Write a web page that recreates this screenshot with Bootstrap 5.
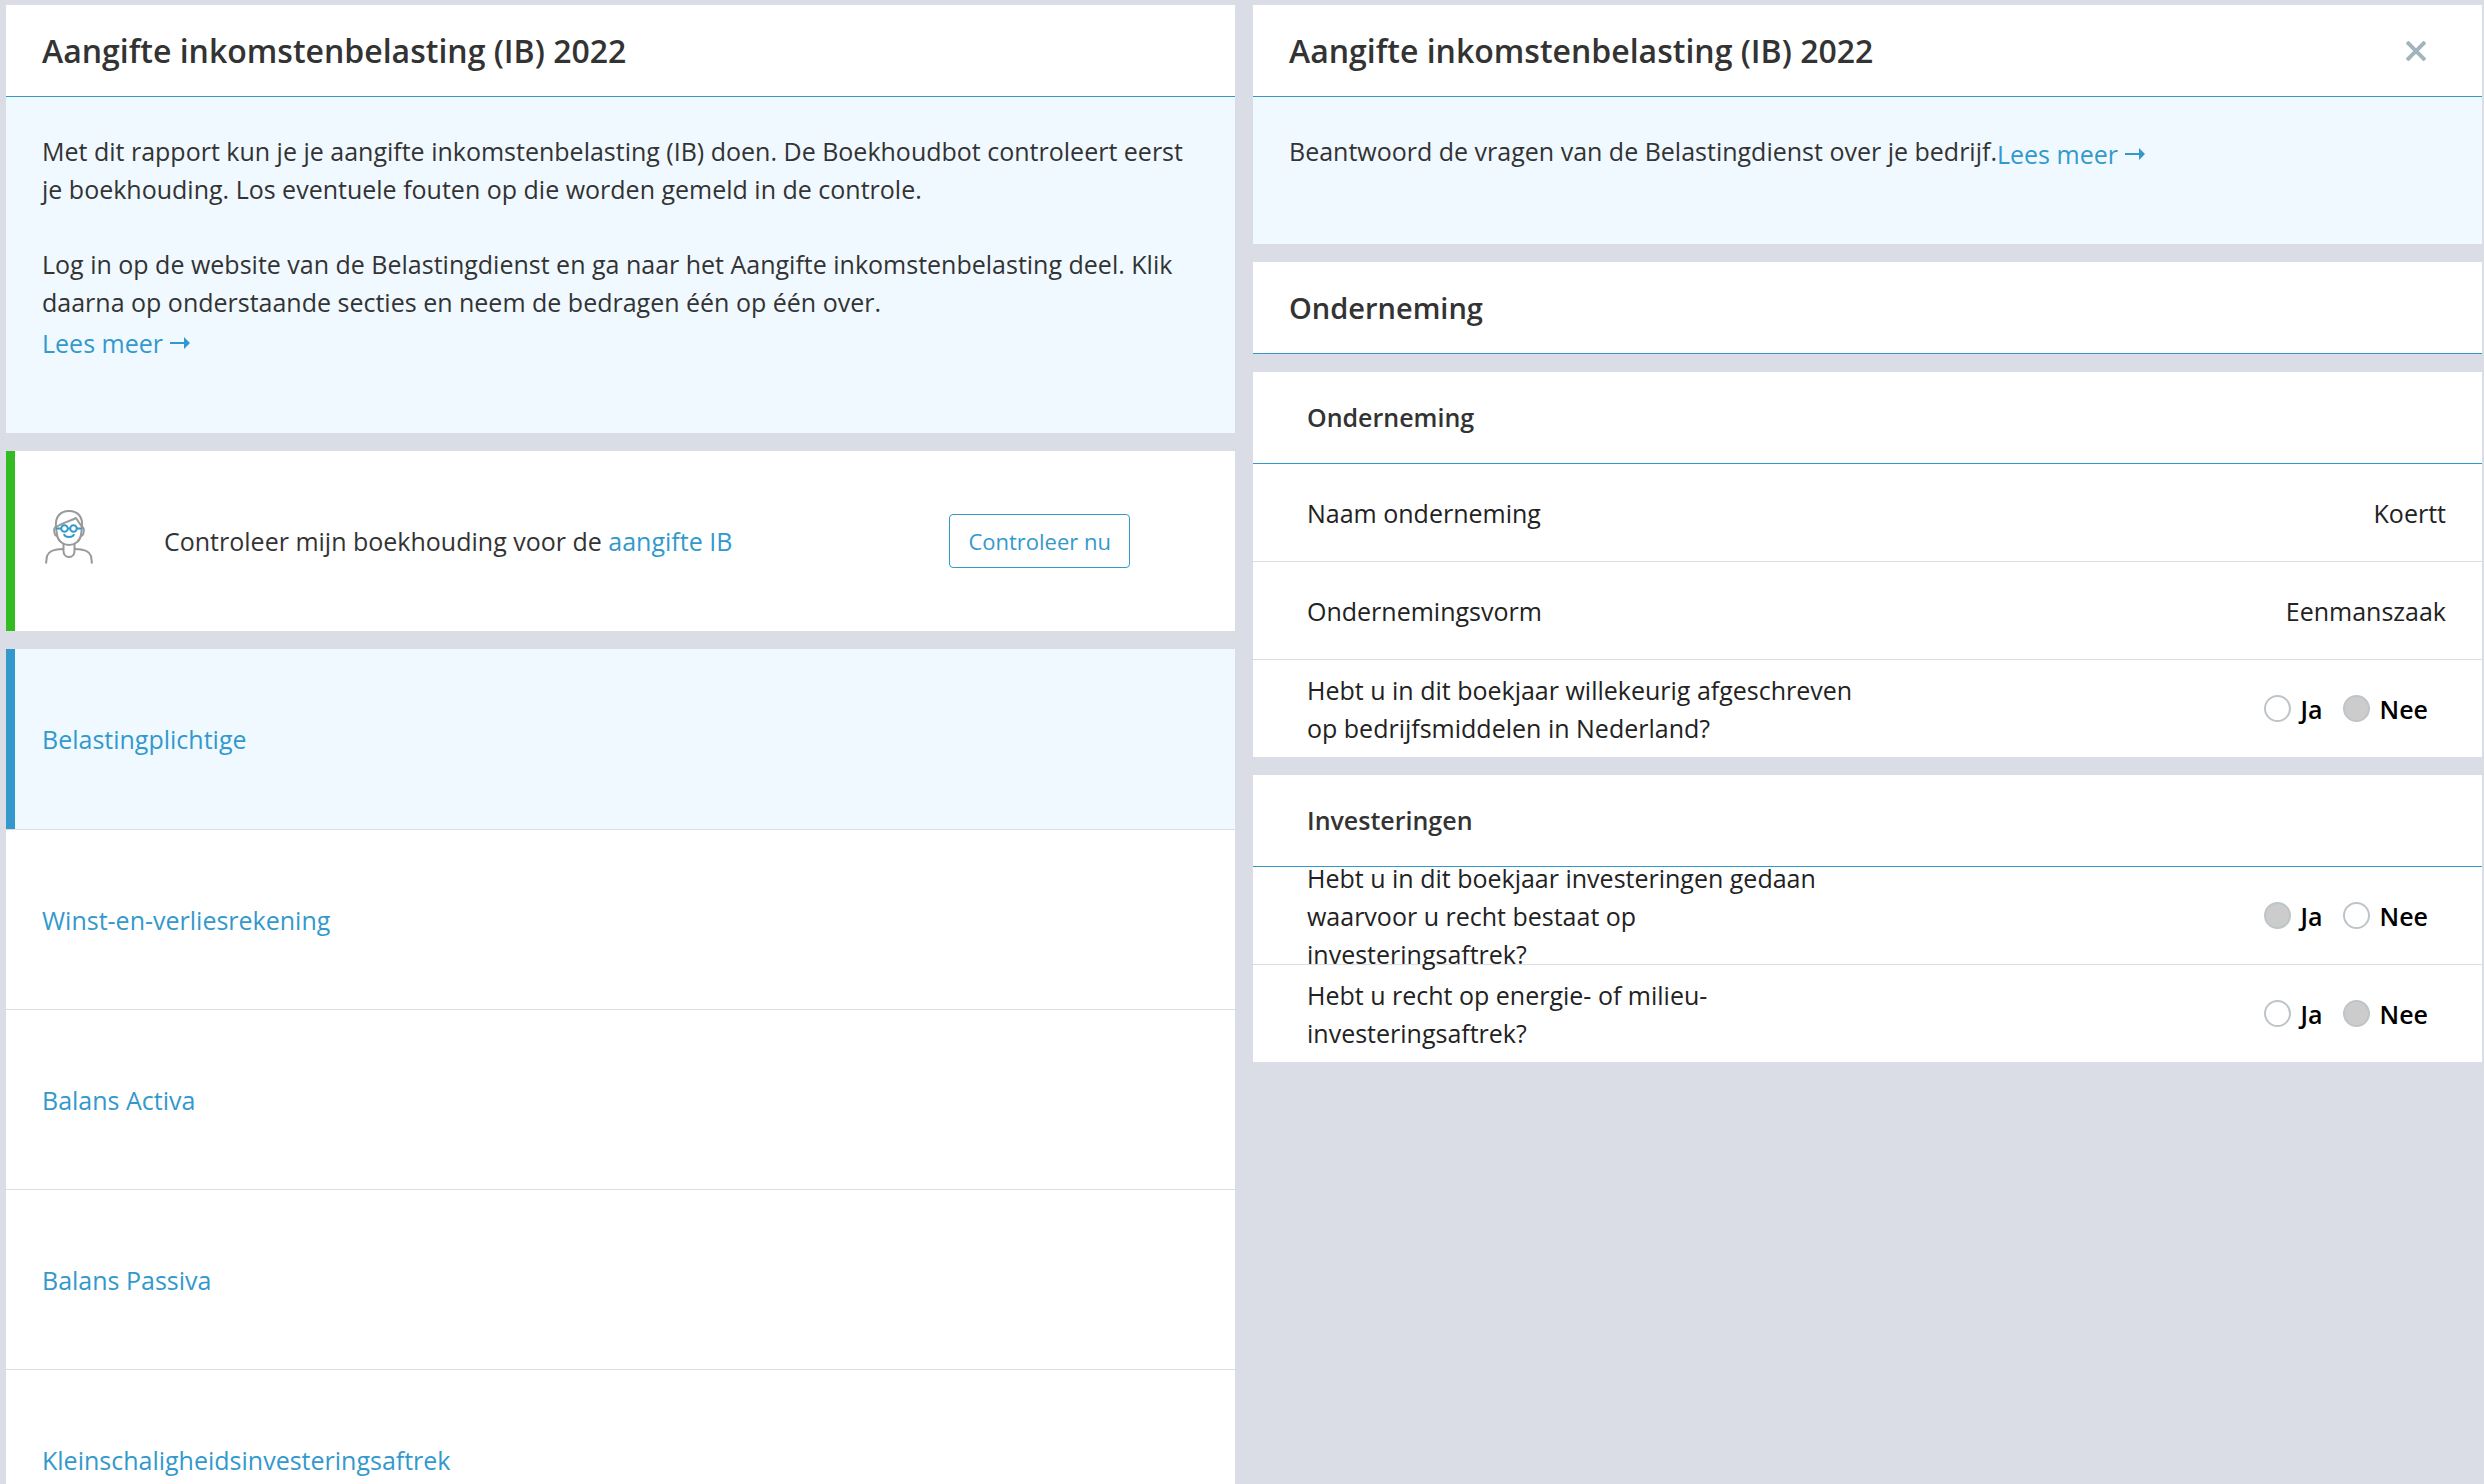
<!DOCTYPE html>
<html lang="nl">
<head>
<meta charset="utf-8">
<meta name="viewport" content="width=device-width, initial-scale=1">
<title>Aangifte inkomstenbelasting (IB) 2022</title>
<link href="https://cdn.jsdelivr.net/npm/bootstrap@5.3.0/dist/css/bootstrap.min.css" rel="stylesheet">
<style>
  :root { --blue: #3399cc; --pale: #f0f9ff; --line: #dadde6; }
  body { background: var(--line); color: #333; font: 400 25px/38px "Open Sans", sans-serif; }
  a, a:hover { color: var(--blue); text-decoration: none; }
  .page { gap: 18px; padding: 5px 2px 0 6px; }
  .pane { flex: 1 1 0; min-width: 0; gap: 18px; }
  .pane-head { height: 92px; padding: 0 36px; background: #fff; border-bottom: 1px solid var(--blue); }
  .pane-head h1, .pane-head h2, .pane-head h3 { margin: 0; font-weight: 600; line-height: 38px; }
  .pane-head h1 { font-size: 32px; }
  .pane-head h2 { font-size: 29px; }
  .pane-head h3 { font-size: 25px; }
  .pane-head.inset { padding: 0 54px 2px; }
  .intro { background: var(--pale); padding: 35px 36px 71px; }
  .intro p { margin: 0; }
  .intro p + p { margin-top: 37px; }
  .more { padding-top: 3px; gap: 7px; }
  .close-x { border: 0; background: none; padding: 0 20px; line-height: 0; }
  .tall { height: 180px; padding: 0 36px; background: #fff; }
  .tall + .tall { border-top: 1px solid var(--line); }
  .tall.ok { padding: 0 105px 0 27px; border-left: 9px solid #33bb22; }
  .tall.current { padding-left: 27px; border-left: 9px solid var(--blue); background: var(--pale); }
  .bot { width: 54px; margin: 0 68px 8px 0; }
  .check-btn { height: 54px; padding: 0 18px; border: 1px solid var(--blue); border-radius: 4px; background: #fff; color: var(--blue); font-size: 22px; }
  .answer { height: 97px; padding: 0 36px 0 54px; background: #fff; color: #222; }
  .answer + .answer { height: 98px; border-top: 1px solid var(--line); }
  .answer .ask { width: 550px; }
  .answer .choice { color: #000; font-weight: 600; gap: 20px; padding-right: 18px; }
  .choice label { gap: 10px; }
  .choice input { appearance: none; width: 27px; height: 27px; margin: 0; border: 2px solid #bdc5c9; border-radius: 50%; background: #fff; }
  .choice input:checked { background: #ccc; }
</style>
<script src="https://cdn.jsdelivr.net/npm/bootstrap@5.3.0/dist/js/bootstrap.bundle.min.js"></script>
</head>
<body>
<div class="page d-flex align-items-start vh-100 overflow-hidden">
  <main class="pane d-flex flex-column">
    <section>
      <header class="pane-head d-flex align-items-center"><h1>Aangifte inkomstenbelasting (IB) 2022</h1></header>
      <div class="intro">
        <p>Met dit rapport kun je je aangifte inkomstenbelasting (IB) doen. De Boekhoudbot controleert eerst je boekhouding. Los eventuele fouten op die worden gemeld in de controle.</p>
        <p>Log in op de website van de Belastingdienst en ga naar het Aangifte inkomstenbelasting deel. Klik daarna op onderstaande secties en neem de bedragen één op één over.</p>
        <a href="#" class="more d-flex align-items-center">Lees meer
          <svg width="21" height="16" viewBox="0 0 21 16" aria-hidden="true"><path d="M0 7h14V2l6 6-6 6V9H0z" fill="currentColor"/></svg></a>
      </div>
    </section>
    <section class="tall ok d-flex align-items-center">
      <svg class="bot flex-shrink-0" height="54" viewBox="0 0 54 54" fill="none" stroke="#999" stroke-width="2" stroke-linejoin="round" aria-hidden="true">
        <path d="M14 17C13 7 18 1 27 1s14 6 13 16"/>
        <path d="M14 17c7-4 14-6 20-9l6 9"/>
        <path d="M14 17l1 8c1 6 6 10 12 10s11-4 12-10l1-8"/>
        <path d="M14 17c-3 0-2 9 1 9M40 17c3 0 2 9-1 9"/>
        <path d="M21.500 33v8c0 3 2 6 5.500 6s5.500-3 5.500-6v-8"/>
        <path d="M21 39C9 39 6 43 5 46l-1 7.500M33 39c12 0 15 4 16 7l1 7.500"/>
        <g stroke="#3399cc"><circle cx="22.500" cy="18.500" r="3.300"/><circle cx="31.500" cy="18.500" r="3.300"/><path d="M14 18.500h5M26 18.500h2M35 18.500h5M22 24c1 4 9 4 10 0"/></g>
      </svg>
      <span>Controleer mijn boekhouding voor de <a href="#">aangifte IB</a></span>
      <button type="button" class="check-btn ms-auto">Controleer nu</button>
    </section>
    <nav aria-label="Secties">
      <a href="#" class="tall current d-flex align-items-center" aria-current="page">Belastingplichtige</a>
      <a href="#" class="tall d-flex align-items-center">Winst-en-verliesrekening</a>
      <a href="#" class="tall d-flex align-items-center">Balans Activa</a>
      <a href="#" class="tall d-flex align-items-center">Balans Passiva</a>
      <a href="#" class="tall d-flex align-items-center">Kleinschaligheidsinvesteringsaftrek</a>
    </nav>
  </main>

  <aside class="pane d-flex flex-column">
    <section>
      <header class="pane-head d-flex align-items-center justify-content-between">
        <h1>Aangifte inkomstenbelasting (IB) 2022</h1>
        <button type="button" class="close-x" aria-label="Sluiten">
          <svg width="20" height="20" viewBox="0 0 20 20" aria-hidden="true"><path d="M1 1l18 18M19 1L1 19" stroke="#a3b5bc" stroke-width="4"/></svg>
        </button>
      </header>
      <div class="intro d-flex">
        <p>Beantwoord de vragen van de Belastingdienst over je bedrijf.</p>
        <a href="#" class="more d-flex align-items-center">Lees meer
          <svg width="21" height="16" viewBox="0 0 21 16" aria-hidden="true"><path d="M0 7h14V2l6 6-6 6V9H0z" fill="currentColor"/></svg></a>
      </div>
    </section>
    <header class="pane-head d-flex align-items-center"><h2>Onderneming</h2></header>
    <section>
      <header class="pane-head inset d-flex align-items-center"><h3>Onderneming</h3></header>
      <div class="answer d-flex align-items-center justify-content-between"><span>Naam onderneming</span><span>Koertt</span></div>
      <div class="answer d-flex align-items-center justify-content-between"><span>Ondernemingsvorm</span><span>Eenmanszaak</span></div>
      <div class="answer d-flex align-items-center justify-content-between" role="radiogroup" aria-labelledby="q1">
        <span class="ask" id="q1">Hebt u in dit boekjaar willekeurig afgeschreven op bedrijfsmiddelen in Nederland?</span>
        <div class="choice d-flex">
          <label class="d-flex align-items-center"><input type="radio" name="afschrijving">Ja</label>
          <label class="d-flex align-items-center"><input type="radio" name="afschrijving" checked>Nee</label>
        </div>
      </div>
    </section>
    <section>
      <header class="pane-head inset d-flex align-items-center"><h3>Investeringen</h3></header>
      <div class="answer d-flex align-items-center justify-content-between" role="radiogroup" aria-labelledby="q2">
        <span class="ask" id="q2">Hebt u in dit boekjaar investeringen gedaan waarvoor u recht bestaat op investeringsaftrek?</span>
        <div class="choice d-flex">
          <label class="d-flex align-items-center"><input type="radio" name="aftrek" checked>Ja</label>
          <label class="d-flex align-items-center"><input type="radio" name="aftrek">Nee</label>
        </div>
      </div>
      <div class="answer d-flex align-items-center justify-content-between" role="radiogroup" aria-labelledby="q3">
        <span class="ask" id="q3">Hebt u recht op energie- of milieu-investeringsaftrek?</span>
        <div class="choice d-flex">
          <label class="d-flex align-items-center"><input type="radio" name="milieu">Ja</label>
          <label class="d-flex align-items-center"><input type="radio" name="milieu" checked>Nee</label>
        </div>
      </div>
    </section>
  </aside>
</div>
</body>
</html>
